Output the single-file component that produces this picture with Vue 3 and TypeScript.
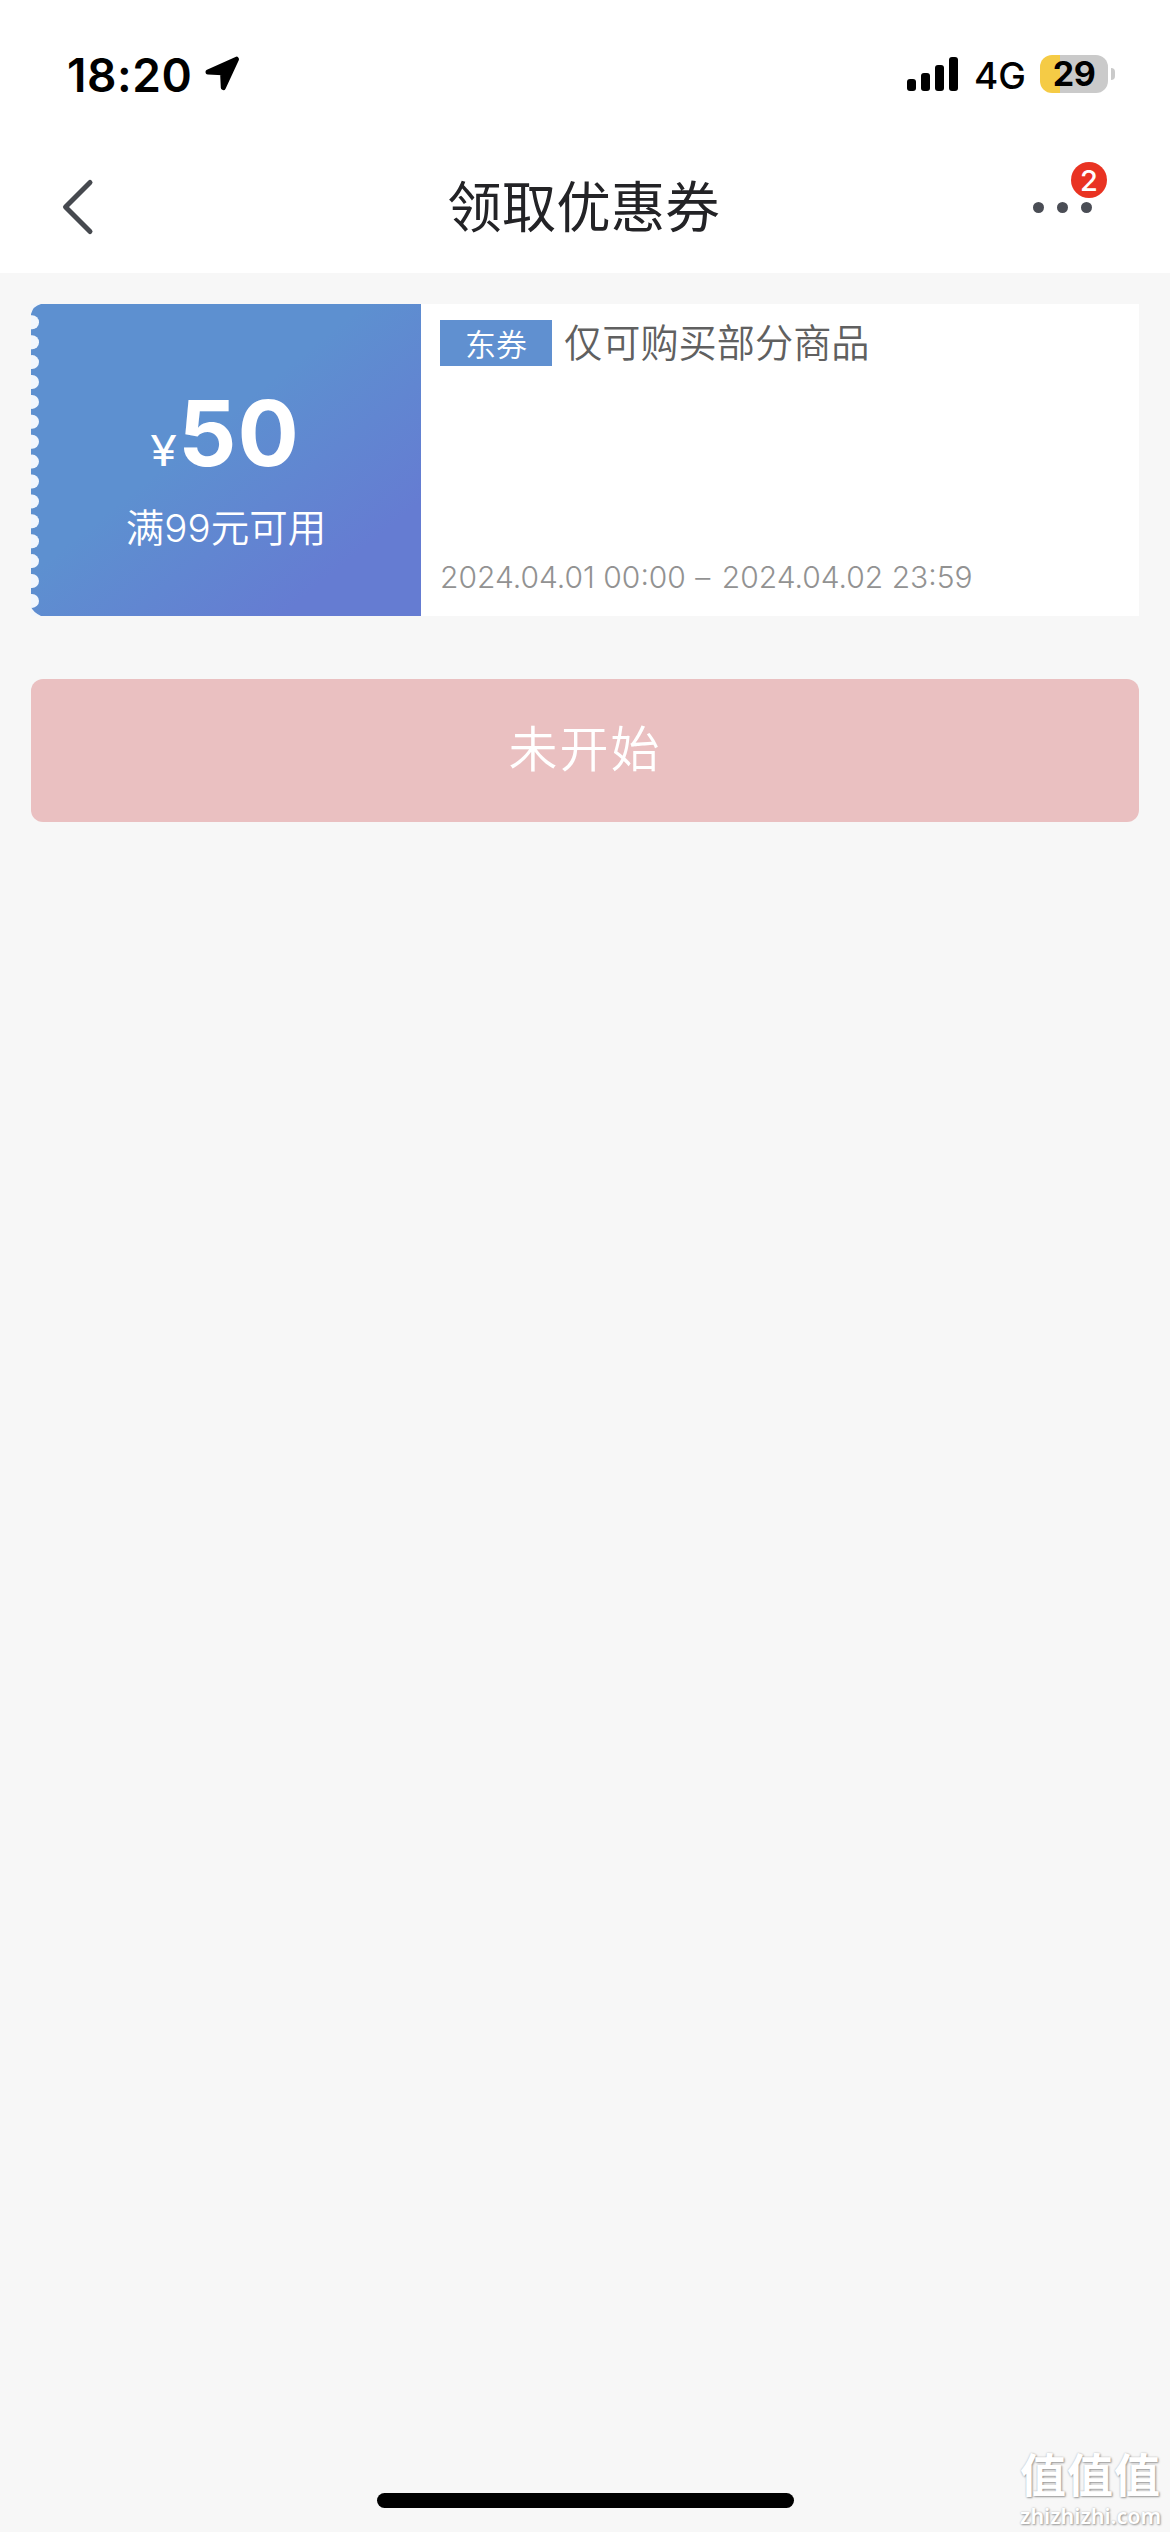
<script setup lang="ts">
interface Coupon {
  currency: string
  amount: number
  condition: string
  tag: string
  scope: string
  start: string
  end: string
}

const coupon: Coupon = {
  currency: '¥',
  amount: 50,
  condition: '满99元可用',
  tag: '东券',
  scope: '仅可购买部分商品',
  start: '2024.04.01 00:00',
  end: '2024.04.02 23:59',
}

const signalBars = [12, 18, 26, 34]
const unread = 2
const battery = 29
const teeth = Array.from({ length: 15 }, (_, i) => 18.3 + i * 19.9)
</script>

<template>
  <div class="screen">
    <header class="top">
      <div class="status">
        <div class="status-left">
          <span class="time">18:20</span>
          <svg class="location" width="38" height="38" viewBox="0 0 38 38">
            <path d="M33.5 4.2 L20.3 32.6 L19.6 17.8 L5 17 Z" fill="#000" stroke="#000" stroke-width="5" stroke-linejoin="round" />
          </svg>
        </div>
        <div class="status-right">
          <div class="signal">
            <i v-for="h in signalBars" :key="h" :style="{ height: h + 'px' }"></i>
          </div>
          <span class="network">4G</span>
          <div class="battery"><span>{{ battery }}</span></div>
          <i class="nub"></i>
        </div>
      </div>
      <nav class="nav">
        <svg class="back" width="36" height="60" viewBox="0 0 36 60">
          <path d="M30 5.5 L5.5 30 L30 54.5" fill="none" stroke="#46494f" stroke-width="5" stroke-linecap="round" stroke-linejoin="round" />
        </svg>
        <h1>领取优惠券</h1>
        <div class="more">
          <i></i><i></i><i></i>
          <span class="badge">{{ unread }}</span>
        </div>
      </nav>
    </header>

    <main>
      <section class="coupon">
        <div class="value">
          <svg class="edge" width="12" height="312" viewBox="0 0 12 312">
            <path d="M0 0H10Q2 2 0 10ZM0 312H10Q2 308 0 303Z" fill="#f3f6fa" />
            <circle v-for="y in teeth" :key="y" cx="1" :cy="y" r="7" fill="#f1f6fd" />
          </svg>
          <div class="price"><span class="currency">{{ coupon.currency }}</span><strong>{{ coupon.amount }}</strong></div>
          <div class="condition">{{ coupon.condition }}</div>
        </div>
        <div class="detail">
          <div class="scope"><span class="tag">{{ coupon.tag }}</span><span>{{ coupon.scope }}</span></div>
          <div class="period">{{ coupon.start }} <span class="dash">–</span> {{ coupon.end }}</div>
        </div>
      </section>
      <button class="action" type="button" disabled>未开始</button>
    </main>

    <div class="home-indicator"></div>
    <div class="watermark">
      <div class="mark">值值值</div>
      <div class="site">zhizhizhi.com</div>
    </div>
  </div>
</template>

<style>
body {
  background: #f7f7f7;
}
</style>

<style scoped>
.screen {
  position: relative;
  width: 1170px;
  height: 2532px;
  overflow: hidden;
  background: #f7f7f7;
  font-family: Inter, "Noto Sans CJK SC", sans-serif;
  box-sizing: border-box;
}
.top {
  height: 273px;
  background: #fff;
}
.status {
  display: flex;
  justify-content: space-between;
  height: 141px;
  padding: 0 55px 0 67px;
  box-sizing: border-box;
}
.status-left {
  display: flex;
  align-items: flex-start;
  padding-top: 54px;
}
.time {
  font-size: 46px;
  font-weight: 600;
  line-height: 42px;
  letter-spacing: 0.6px;
  width: 136px;
}
.location {
  margin-top: 1px;
}
.status-right {
  display: flex;
  align-items: center;
  height: 38px;
  padding-top: 55px;
}
.signal {
  display: flex;
  align-items: flex-end;
  gap: 5px;
  height: 34px;
}
.signal i {
  width: 9px;
  border-radius: 3px;
  background: #000;
}
.network {
  width: 66px;
  padding-left: 16px;
  box-sizing: border-box;
  margin-right: 16px;
  font-size: 37px;
  font-weight: 500;
  line-height: 38px;
  position: relative;
  top: 2px;
}
.battery {
  width: 68px;
  height: 38px;
  border-radius: 12px;
  background: linear-gradient(to right, #f5cb45 0 20px, #cacaca 20px);
  text-align: center;
  font-size: 34px;
  font-weight: 700;
  line-height: 38px;
  letter-spacing: -0.5px;
}
.nub {
  width: 4px;
  height: 12px;
  margin-left: 3px;
  border-radius: 0 4px 4px 0;
  background: #cacaca;
}
.nav {
  display: flex;
  align-items: center;
  justify-content: space-between;
  height: 132px;
  padding: 0 78px 0 60px;
}
.back {
  margin-right: 38px;
}
h1 {
  margin: 0;
  font-size: 54.5px;
  font-weight: 400;
  line-height: 80px;
  color: #232326;
}
.more {
  position: relative;
  display: flex;
  gap: 13px;
}
.more i {
  width: 11px;
  height: 11px;
  border-radius: 50%;
  background: #4a4d55;
}
.badge {
  position: absolute;
  left: 38px;
  top: -40px;
  width: 36px;
  height: 36px;
  border-radius: 50%;
  background: #e93322;
  color: #fff;
  font-size: 29px;
  font-weight: 500;
  line-height: 37px;
  text-align: center;
}
main {
  padding: 31px 31px 0;
}
.coupon {
  display: flex;
  height: 312px;
  background: #fff;
}
.value {
  position: relative;
  width: 390px;
  padding-top: 74px;
  box-sizing: border-box;
  background: linear-gradient(141deg, #5d90d0 0%, #5d90d0 43%, #657cd2 82%, #657cd2 100%);
  color: #fff;
  text-align: center;
}
.edge {
  position: absolute;
  left: 0;
  top: 0;
}
.price {
  line-height: 110px;
  height: 110px;
}
.currency {
  display: inline-block;
  margin-right: 3px;
  font-size: 42px;
  transform: scaleX(1.15);
}
.price strong {
  font-size: 91px;
  font-weight: 700;
  letter-spacing: 1px;
}
.condition {
  margin-top: 12px;
  font-size: 38.5px;
  font-weight: 350;
  line-height: 56px;
}
.detail {
  flex: 1;
  display: flex;
  flex-direction: column;
  justify-content: space-between;
  padding: 16px 19px 19px;
}
.scope {
  display: flex;
  align-items: center;
  gap: 12px;
  height: 46px;
  font-size: 38.2px;
  font-weight: 350;
  color: #606060;
  line-height: 48px;
}
.tag {
  width: 112px;
  height: 46px;
  background: #6090d0;
  color: #fff;
  font-size: 31px;
  line-height: 50px;
  text-align: center;
}
.period {
  font-size: 30px;
  font-weight: 300;
  line-height: 40px;
  color: #929292;
  white-space: nowrap;
}
.dash {
  margin: 0 3px 0 1px;
}
.action {
  display: block;
  width: 1108px;
  height: 143px;
  margin-top: 63px;
  padding: 0 0 2px;
  border: 0;
  border-radius: 12px;
  background: #eac0c1;
  color: #fff;
  font-family: inherit;
  font-size: 49px;
  font-weight: 350;
  letter-spacing: 2px;
  line-height: 140px;
}
.home-indicator {
  position: absolute;
  left: 377px;
  bottom: 24px;
  width: 417px;
  height: 15px;
  border-radius: 8px;
  background: #000;
}
.watermark {
  position: absolute;
  right: 7px;
  bottom: 4px;
  width: 143px;
  color: #fff;
  text-shadow: 1px 1px 2px #999, 0 0 2px #bbb;
  white-space: nowrap;
}
.mark {
  margin-bottom: 5px;
  font-family: "Noto Sans CJK SC", sans-serif;
  font-size: 46px;
  font-weight: 700;
  line-height: 53px;
  letter-spacing: 1px;
}
.site {
  font-family: "Noto Sans", sans-serif;
  font-size: 21.5px;
  font-weight: 600;
  line-height: 24px;
}
</style>
